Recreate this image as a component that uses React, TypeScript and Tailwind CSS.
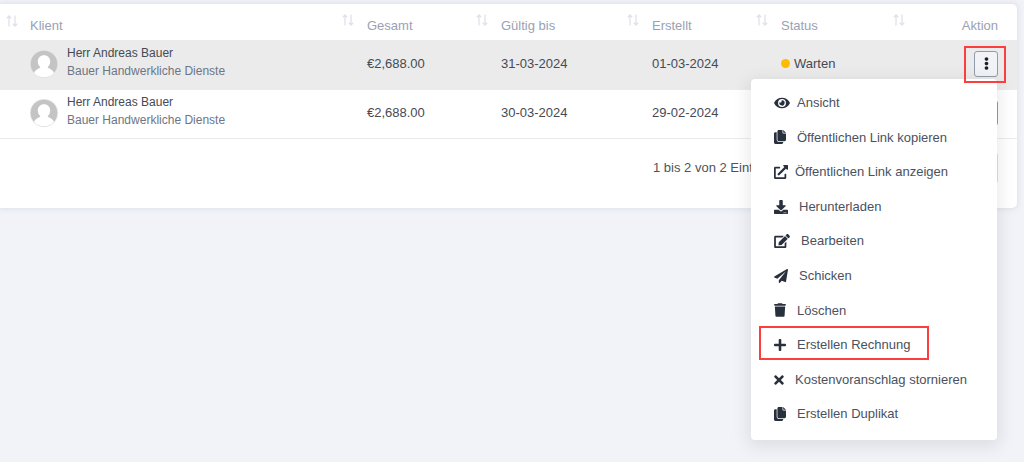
import React from "react";
import {
  FaDownload,
  FaEdit,
  FaEllipsisV,
  FaExternalLinkAlt,
  FaEye,
  FaPaperPlane,
  FaPlus,
  FaTimes,
} from "react-icons/fa";
import { FaTrash } from "react-icons/fa6";

type Estimate = {
  id: number;
  name: string;
  company: string;
  total: string;
  validUntil: string;
  created: string;
  status?: string;
};

const estimates: Estimate[] = [
  {
    id: 1,
    name: "Herr Andreas Bauer",
    company: "Bauer Handwerkliche Dienste",
    total: "€2,688.00",
    validUntil: "31-03-2024",
    created: "01-03-2024",
    status: "Warten",
  },
  {
    id: 2,
    name: "Herr Andreas Bauer",
    company: "Bauer Handwerkliche Dienste",
    total: "€2,688.00",
    validUntil: "30-03-2024",
    created: "29-02-2024",
  },
];

const columns = ["Klient", "Gesamt", "Gültig bis", "Erstellt", "Status"];

const CopyIcon = () => (
  <svg viewBox="0 0 12 14" className="h-3.5 w-3" fill="currentColor">
    <path d="M4.800 0H8.500v2.600c0 .5.400.9.900.9H12v6.300c0 .8-.6 1.400-1.400 1.400H4.800c-.8 0-1.400-.6-1.400-1.400V1.400C3.400.6 4 0 4.800 0z" />
    <path d="M9.200 0 12 2.800H9.600a.4.4 0 0 1-.4-.4V0z" />
    <path d="M2.700 2.200v7.600c0 1.200.9 2.100 2.100 2.100h4.400v.7c0 .8-.6 1.400-1.400 1.400H1.400C.6 14 0 13.400 0 12.600v-9c0-.8.6-1.400 1.400-1.400h1.300z" />
  </svg>
);

const menuItems = [
  {
    title: "Ansicht",
    icon: <FaEye className="h-3.5 w-4" />,
    gap: "gap-[7px]",
  },
  {
    title: "Öffentlichen Link kopieren",
    icon: <CopyIcon />,
    gap: "gap-[11px]",
  },
  {
    title: "Öffentlichen Link anzeigen",
    icon: <FaExternalLinkAlt className="h-3.5 w-3.5" />,
    gap: "gap-[7px]",
  },
  {
    title: "Herunterladen",
    icon: <FaDownload className="h-3.5 w-3.5" />,
    gap: "gap-[11px]",
  },
  {
    title: "Bearbeiten",
    icon: <FaEdit className="h-3.5 w-4" />,
    gap: "gap-[11px]",
  },
  {
    title: "Schicken",
    icon: <FaPaperPlane className="h-3.5 w-3.5" />,
    gap: "gap-[11px]",
  },
  {
    title: "Löschen",
    icon: <FaTrash className="h-3.5 w-3" />,
    gap: "gap-[11px]",
  },
  {
    title: "Erstellen Rechnung",
    icon: <FaPlus className="h-3.5 w-3" />,
    gap: "gap-[11px]",
    marked: true,
  },
  {
    title: "Kostenvoranschlag stornieren",
    icon: <FaTimes className="h-3.5 w-2.5" />,
    gap: "gap-[11px]",
  },
  {
    title: "Erstellen Duplikat",
    icon: <CopyIcon />,
    gap: "gap-[11px]",
  },
];

const SortIcon = () => (
  <svg
    viewBox="0 0 12 12"
    className="h-3 w-3 shrink-0"
    fill="none"
    stroke="#dfe2e9"
    strokeWidth="1.3"
  >
    <path d="M3 11.5V1M0.8 3.3 3 1l2.2 2.3M9 0.5V11M6.8 8.7 9 11l2.2-2.3" />
  </svg>
);

const Avatar = () => (
  <svg viewBox="0 0 28 28" className="h-7 w-7 shrink-0">
    <circle cx="14" cy="14" r="14" fill="#e3e6e8" />
    <circle cx="14" cy="14" r="13.3" fill="#c4c4c4" />
    <path
      d="M14 5.2c3.600 0 6.200 2.600 6.200 6.200 0 2.400-1 4.300-2.500 5.500.2.7.6 1 1.600 1.500 2 .9 3.900 2.500 4.700 4.600A13.300 13.300 0 0 1 14 27.300a13.300 13.300 0 0 1-10-4.300c.8-2.100 2.700-3.700 4.700-4.600 1-.5 1.400-.8 1.600-1.500-1.500-1.200-2.500-3.100-2.500-5.500 0-3.600 2.600-6.200 6.200-6.200z"
      fill="#fff"
    />
  </svg>
);

const ActionMenu = () => (
  <div
    role="menu"
    className="absolute right-px top-7 z-10 flex h-[361px] w-[246px] flex-col rounded-[4px] bg-white pt-[7px] pb-2 text-left shadow-[0_4px_16px_4px_rgba(0,0,0,0.08)]"
  >
    {menuItems.map((item) => (
      <button
        key={item.title}
        type="button"
        role="menuitem"
        className={`relative flex flex-1 cursor-pointer items-center whitespace-nowrap pl-[23px] text-[13px] text-[#4a5160] ${item.gap}`}
      >
        <span className="text-[#29303d]">{item.icon}</span>
        <span>{item.title}</span>
        {item.marked && (
          <span className="absolute -top-0.5 bottom-0.5 left-2 w-[170px] border-2 border-[#fb3e3e]" />
        )}
      </button>
    ))}
  </div>
);

const RowAction = ({ open }: { open: boolean }) => (
  <div className="relative ml-auto h-[26px] w-6">
    <button
      type="button"
      aria-label="Aktion"
      aria-expanded={open}
      className="flex h-full w-full cursor-pointer items-center justify-center rounded-[3px] border border-[#8f9cad] bg-[#f1f3f7] text-[13px] text-[#1b1f27]"
    >
      <FaEllipsisV />
    </button>
    {open && <ActionMenu />}
    {open && (
      <span className="pointer-events-none absolute -top-[5px] -right-2 -bottom-1.5 -left-2.5 z-20 border-2 border-[#fb3e3e]" />
    )}
  </div>
);

const App = () => {
  return (
    <div className="min-h-screen bg-[#f1f3f8] pt-1 pr-[7px] font-['Liberation_Sans',Arial,sans-serif]">
      <div className="rounded-r-[5px] bg-white shadow-[0_0_5px_1px_rgba(205,212,226,0.6)]">
        <table className="w-full table-fixed border-collapse text-[13px] text-[#454a54]">
          <colgroup>
            <col className="w-5" />
            <col />
            <col className="w-[134px]" />
            <col className="w-[151px]" />
            <col className="w-[129px]" />
            <col className="w-[137px]" />
            <col className="w-[109px]" />
          </colgroup>
          <thead>
            <tr className="h-9 border-b border-[#ebecef] text-[#99a1b5]">
              <td className="pl-1.5 pb-0.5">
                <SortIcon />
              </td>
              {columns.map((title) => (
                <th key={title} className="pt-2 pr-[3px] pl-2.5 font-medium">
                  <div className="flex items-start justify-between">
                    <span>{title}</span>
                    <span className="-mt-0.5">
                      <SortIcon />
                    </span>
                  </div>
                </th>
              ))}
              <th className="pt-2 pr-[19px] text-right font-medium">Aktion</th>
            </tr>
          </thead>
          <tbody>
            {estimates.map((row, index) => (
              <tr
                key={row.id}
                className={`h-[49px] border-b border-[#ececec] ${
                  index === 0 ? "bg-[#ebebeb]" : "bg-white"
                }`}
              >
                <td />
                <td className="pb-0.5 pl-2.5">
                  <div className="flex items-center gap-[9px]">
                    <Avatar />
                    <div className="pb-1 text-[12px] leading-[18px]">
                      <p>{row.name}</p>
                      <p className="text-[#6c7685]">{row.company}</p>
                    </div>
                  </div>
                </td>
                <td className="pb-0.5 pl-2.5">{row.total}</td>
                <td className="pb-0.5 pl-2.5">{row.validUntil}</td>
                <td className="pb-0.5 pl-2.5">{row.created}</td>
                <td className="pb-0.5 pl-2.5">
                  {row.status && (
                    <div className="flex items-center gap-1">
                      <span className="h-[9px] w-[9px] rounded-full bg-[#fdbb06]" />
                      {row.status}
                    </div>
                  )}
                </td>
                <td className="pr-[19px] pb-0.5">
                  <RowAction open={index === 0} />
                </td>
              </tr>
            ))}
          </tbody>
        </table>
        <div className="flex h-[69px] items-center justify-end gap-4 pr-[19px] pb-2.5">
          <p className="text-[13px] text-[#4d535e]">1 bis 2 von 2 Einträgen</p>
          <nav className="flex h-[30px] w-[196px] justify-end">
            <button
              type="button"
              aria-label="Nächste Seite"
              className="w-20 rounded-[2px] border border-[#dddfe3]"
            />
          </nav>
        </div>
      </div>
    </div>
  );
};

export default App;
